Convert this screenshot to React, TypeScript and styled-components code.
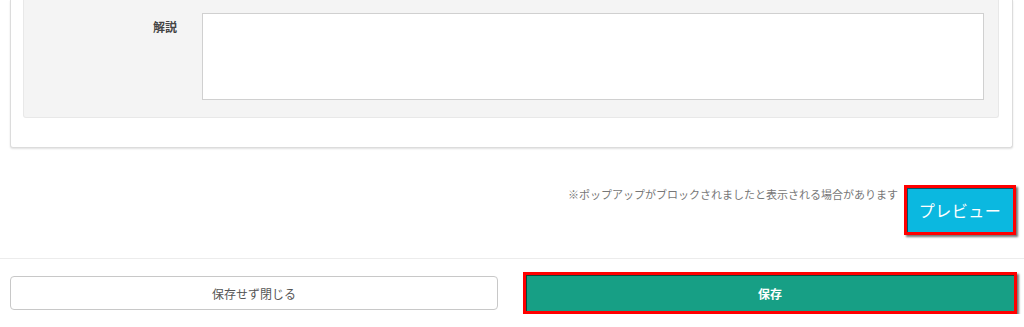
import styled, { createGlobalStyle } from "styled-components";

const GlobalStyle = createGlobalStyle`
  body {
    margin: 0;
    background: #fff;
    font-family: "Noto Sans CJK JP", "Noto Sans", sans-serif;
    color: #333;
  }
`;

const Page = styled.div`
  width: 1024px;
`;

const Card = styled.section`
  margin: 0 11px 0 10px;
  padding: 0 13px 29px 12px;
  border: 1px solid #dcdcdc;
  border-top: none;
  border-radius: 0 0 3px 3px;
  box-shadow: 0 1px 2px rgba(0, 0, 0, 0.12);
  background: #fff;
`;

const FieldPanel = styled.div`
  display: grid;
  grid-template-columns: 178px 1fr;
  padding: 13px 14px 17px 0;
  background: #f4f4f4;
  border: 1px solid #e8e8e8;
  border-top: none;
  border-radius: 0 0 3px 3px;
`;

const Label = styled.label`
  padding: 5px 25px 0 0;
  text-align: right;
  font-size: 12px;
  font-weight: bold;
  color: #444;
`;

const TextArea = styled.textarea`
  display: block;
  box-sizing: border-box;
  width: 100%;
  height: 87px;
  margin: 0;
  border: 1px solid #d0d0d0;
  background: #fff;
  resize: none;
  outline: none;
`;

const PreviewRow = styled.div`
  display: flex;
  justify-content: flex-end;
  align-items: flex-start;
  gap: 6px;
  margin-top: 37px;
  padding: 0 8px 23px 0;
  border-bottom: 1px solid #ececec;
`;

const Note = styled.p`
  margin: 0;
  padding-top: 1px;
  font-size: 11px;
  line-height: 16px;
  color: #777;
`;

const Highlighted = styled.button<{ $bg: string; $bold?: boolean }>`
  box-sizing: border-box;
  border: 3px solid #ff0000;
  background: ${({ $bg }) => $bg};
  color: #fff;
  font-family: inherit;
  font-weight: ${({ $bold }) => ($bold ? "bold" : "normal")};
  box-shadow: inset 1px 1px 0 rgba(0, 0, 0, 0.55),
    2px 2px 2px rgba(0, 0, 0, 0.55);
  cursor: pointer;
`;

const PreviewButton = styled(Highlighted)`
  width: 112px;
  height: 50px;
  font-size: 16px;
  letter-spacing: 0.5px;
`;

const ActionRow = styled.div`
  display: grid;
  grid-template-columns: 488px 494px;
  justify-content: space-between;
  align-items: center;
  padding: 13px 7px 0 10px;
`;

const CloseButton = styled.button`
  height: 34px;
  border: 1px solid #c8c8c8;
  border-radius: 4px;
  background: #fff;
  color: #555;
  font-family: inherit;
  font-size: 12px;
  cursor: pointer;
`;

const SaveButton = styled(Highlighted)`
  height: 42px;
  font-size: 12px;
`;

export default function App() {
  return (
    <Page>
      <GlobalStyle />
      <Card>
        <FieldPanel>
          <Label htmlFor="desc">解説</Label>
          <TextArea id="desc" />
        </FieldPanel>
      </Card>
      <PreviewRow>
        <Note>※ポップアップがブロックされましたと表示される場合があります</Note>
        <PreviewButton $bg="#0bb8e0">プレビュー</PreviewButton>
      </PreviewRow>
      <ActionRow>
        <CloseButton>保存せず閉じる</CloseButton>
        <SaveButton $bg="#179f85" $bold>
          保存
        </SaveButton>
      </ActionRow>
    </Page>
  );
}
